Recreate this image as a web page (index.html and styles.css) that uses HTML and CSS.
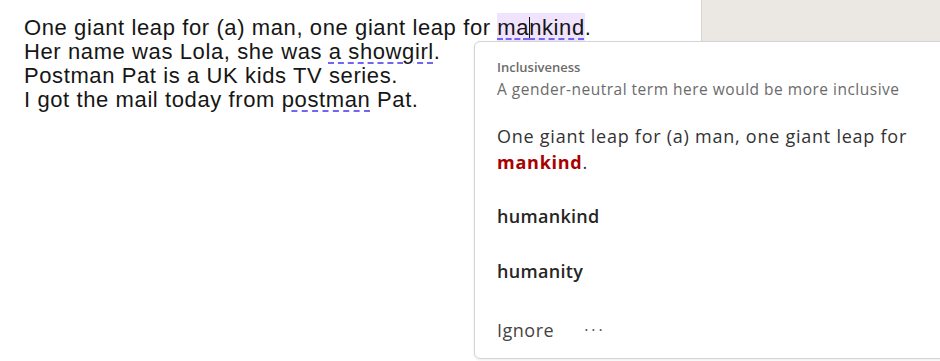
FILE: index.html
```html
<!DOCTYPE html>
<html>
<head>
<meta charset="utf-8">
<link rel="stylesheet" href="styles.css">
</head>
<body>
<div class="page">
  <div class="doc">
    <p class="line">One giant leap for (a) man, one giant leap for <span class="flag hl">ma<span class="caret"></span>nkind</span>.</p>
    <p class="line">Her name was Lola, she was <span class="flag">a showgirl</span>.</p>
    <p class="line">Postman Pat is a UK kids TV series.</p>
    <p class="line">I got the mail today from <span class="flag">postman</span> Pat.</p>
  </div>
  <div class="pane"></div>
  <div class="card">
    <div class="cat">Inclusiveness</div>
    <div class="desc">A gender-neutral term here would be more inclusive</div>
    <div class="context">One giant leap for (a) man, one giant leap for <b class="bad">mankind</b>.</div>
    <div class="sugg">humankind</div>
    <div class="sugg">humanity</div>
    <div class="actions"><span class="ignore">Ignore</span><span class="more">···</span></div>
  </div>
</div>
</body>
</html>
```
FILE: styles.css
```css
html, body {
  margin: 0;
  padding: 0;
  background: #ffffff;
}
.page {
  position: relative;
  width: 940px;
  height: 361px;
  overflow: hidden;
}
.doc {
  padding: 16px 0 0 24px;
  font-family: "Liberation Sans", Arial, sans-serif;
  font-size: 22px;
  letter-spacing: 0.6px;
  color: #161616;
}
.line {
  margin: 0;
  line-height: 24px;
  white-space: nowrap;
}
.flag {
  text-decoration: underline dashed #7265f2;
  text-decoration-thickness: 2px;
  text-underline-offset: 3px;
}
.hl {
  background: #f0e3fd;
  padding: 2px 0 3px;
}
.caret {
  display: inline-block;
  width: 1px;
  height: 23px;
  background: #111;
  vertical-align: -5px;
  margin: 0 -0.5px;
}
.pane {
  position: absolute;
  left: 701px;
  top: 0;
  width: 239px;
  height: 41px;
  background: #ebe7e3;
  border-left: 1px solid #d8d4d0;
  box-sizing: border-box;
}
.card {
  position: absolute;
  left: 474px;
  top: 41px;
  width: 500px;
  height: 318px;
  box-sizing: border-box;
  border: 1px solid #d4d4d4;
  border-radius: 6px;
  background: #fff;
  padding: 17px 0 0 22px;
  font-family: "Open Sans", "Noto Sans", sans-serif;
  box-shadow: 0 1px 3px rgba(0,0,0,0.08);
}
.cat {
  font-size: 13px;
  font-weight: 600;
  color: #6b6b6b;
  line-height: 16px;
}
.desc {
  font-size: 15.5px;
  letter-spacing: 0.5px;
  color: #6b6b6b;
  line-height: 20px;
  margin-top: 4px;
}
.context {
  font-size: 18px;
  letter-spacing: 0.75px;
  color: #333;
  line-height: 26px;
  margin-top: 24px;
  width: 425px;
}
.bad {
  color: #a80000;
  font-weight: 700;
}
.sugg {
  font-size: 18px;
  font-weight: 600;
  letter-spacing: 0.3px;
  color: #262626;
  line-height: 22px;
  margin-top: 30px;
}
.sugg + .sugg {
  margin-top: 33px;
}
.actions {
  margin-top: 37px;
  font-size: 18px;
  letter-spacing: 0.5px;
  color: #444;
  line-height: 22px;
  display: flex;
  align-items: center;
  gap: 30px;
}
.more {
  font-size: 16px;
  letter-spacing: 3px;
  color: #555;
}
```
